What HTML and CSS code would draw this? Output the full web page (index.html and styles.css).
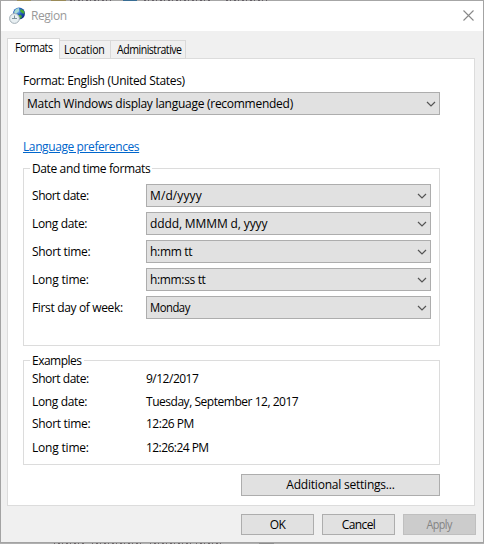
FILE: index.html
```html
<!DOCTYPE html>
<html lang="en">
<head>
<meta charset="utf-8">
<title>Region</title>
<link rel="stylesheet" href="styles.css">
</head>
<body>
<svg class="defs" width="0" height="0" aria-hidden="true"><symbol id="chevron" viewBox="0 0 10 6"><path d="M1 1 L5 5 L9 1" fill="none" stroke="#555" stroke-width="1.2"/></symbol></svg>
<svg class="backdrop" width="484" height="1"><rect width="484" height="1" fill="#a6a6a6"/><path d="M17 .5H31 M51 .5H66" stroke="#9a8b58"/><path d="M70 .5H111 M144 .5H212 M226 .5H267" stroke="#635e65" stroke-dasharray="2 2 1 3"/><path d="M123 .5H137" stroke="#386d94"/></svg>
<div class="window">
  <header class="titlebar">
    <svg class="globe" width="18" height="18" viewBox="0 0 18 18">
      <defs><radialGradient id="sea" cx=".4" cy=".3" r=".75"><stop offset="0" stop-color="#8bc8f0"/><stop offset=".4" stop-color="#2865c0"/><stop offset="1" stop-color="#0b2183"/></radialGradient></defs>
      <circle cx="10" cy="6.5" r="6" fill="url(#sea)"/>
      <path d="M5 5 L7 2 L10 1 L10 4 L8 6 L6 7 Z" fill="#a7d9d3"/>
      <path d="M12 2 L15 4 L15.5 7 L13 6 L11 4 Z M9 8 L12 8 L13 10 L11 12 Z" fill="#46aa36"/>
      <circle cx="5.5" cy="11.5" r="4.9" fill="#e8eff2" stroke="#a2afb7"/>
      <path d="M5.5 8.5 V12 M3 11.5 H8" fill="none" stroke="#7f929c"/>
    </svg>
    <h1 class="title">Region</h1>
    <svg class="close" width="11" height="11" viewBox="0 0 11 11"><path d="M.5 .5 L10.5 10.5 M10.5 .5 L.5 10.5" stroke="#888" stroke-width="1.1"/></svg>
  </header>
  <nav class="tabs">
    <div class="tab active"><span class="t-formats">Formats</span></div>
    <div class="tab location"><span class="t-location">Location</span></div>
    <div class="tab admin"><span class="t-admin">Administrative</span></div>
  </nav>
  <main class="panel">
    <div class="format-label"><span class="t-format">Format: English (United States)</span></div>
    <div class="combo wide"><span class="t-match">Match Windows display language (recommended)</span><svg class="arrow"><use href="#chevron"/></svg></div>
    <a class="link"><span class="t-link">Language preferences</span></a>
    <section class="group formats">
      <h2 class="legend"><span class="t-dtf">Date and time formats</span></h2>
      <div class="row"><span class="name"><span class="t-sd">Short date:</span></span><div class="combo"><span class="t-mdy">M/d/yyyy</span><svg class="arrow"><use href="#chevron"/></svg></div></div>
      <div class="row"><span class="name"><span class="t-ld">Long date:</span></span><div class="combo"><span class="t-dddd">dddd, MMMM d, yyyy</span><svg class="arrow"><use href="#chevron"/></svg></div></div>
      <div class="row"><span class="name"><span class="t-st">Short time:</span></span><div class="combo"><span class="t-hm">h:mm tt</span><svg class="arrow"><use href="#chevron"/></svg></div></div>
      <div class="row"><span class="name"><span class="t-lt">Long time:</span></span><div class="combo"><span class="t-hms">h:mm:ss tt</span><svg class="arrow"><use href="#chevron"/></svg></div></div>
      <div class="row"><span class="name"><span class="t-fd">First day of week:</span></span><div class="combo"><span class="t-mon">Monday</span><svg class="arrow"><use href="#chevron"/></svg></div></div>
    </section>
    <section class="group examples">
      <h2 class="legend"><span class="t-ex">Examples</span></h2>
      <div class="sample"><span class="name"><span class="t-sd">Short date:</span></span><span class="t-v1">9/12/2017</span></div>
      <div class="sample"><span class="name"><span class="t-ld">Long date:</span></span><span class="t-v2">Tuesday, September 12, 2017</span></div>
      <div class="sample short"><span class="name"><span class="t-st">Short time:</span></span><span class="t-v3">12:26 PM</span></div>
      <div class="sample"><span class="name"><span class="t-lt">Long time:</span></span><span class="t-v4">12:26:24 PM</span></div>
    </section>
    <div class="button additional"><span class="t-add">Additional settings...</span></div>
  </main>
  <footer class="actions">
    <div class="button"><span class="t-ok">OK</span></div>
    <div class="button"><span class="t-cancel">Cancel</span></div>
    <div class="button disabled"><span class="t-apply">Apply</span></div>
  </footer>
</div>
<svg class="backdrop" width="484" height="1"><rect width="484" height="1" fill="#b0b0b0"/><path d="M54 .5H86 M92 .5H144 M150 .5H191 M196 .5H221" stroke="#6c6568" stroke-dasharray="1 3 2 2"/><path d="M259 .5H274" stroke="#8f8f8f"/></svg>
</body>
</html>
```
FILE: styles.css
```css
* { box-sizing: border-box; }
body { margin: 0; width: 484px; height: 544px; overflow: hidden; background: #a8a8a8; color: #000; font: 12px/16px "Open Sans", "Noto Sans", sans-serif; }
h1, h2 { margin: 0; font: inherit; }
span { white-space: nowrap; }
.defs, .backdrop { display: block; }
.window { width: 484px; height: 542px; border: 1px solid #a3a3a3; border-top: 0; background: #f0f0f0; }
.titlebar { display: flex; height: 30px; padding: 6px 9px 0 8px; background: #fff; }
.title { margin: 1px 0 0 4px; color: #999; letter-spacing: -.45px; }
.close { margin: 3px 0 0 auto; }
.tabs { display: flex; align-items: flex-end; height: 28px; margin: 0 0 -1px 6px; }
.tab { height: 19px; width: 51px; padding: 1px 0 0 4px; border: 1px solid #d9d9d9; border-left: 0; background: #f0f0f0; }
.tab span { display: inline-block; transform: scaleX(.88); transform-origin: left; }
.tab.admin { width: 75px; padding-left: 6px; }
.tab.active { height: 21px; width: 53px; padding: 1px 0 0 7px; border: 1px solid #d9d9d9; border-bottom: 0; background: #fff; position: relative; }
.panel { width: 468px; height: 448px; margin-left: 6px; padding: 14px 34px 0 15px; border: 1px solid #dcdcdc; background: #fff; }
.format-label { height: 19px; }
.combo { display: flex; align-items: center; justify-content: space-between; width: 285px; height: 23px; padding: 0 3px; border: 1px solid #adadad; background: #e1e1e1; }
.combo.wide { width: 417px; }
.arrow { width: 10px; height: 6px; }
.link { display: block; height: 16px; margin-top: 24px; color: #0066cc; text-decoration: underline; }
.group { width: 417px; border: 1px solid #dcdcdc; padding-left: 8px; }
.formats { height: 178px; margin-top: 13px; }
.legend { width: max-content; height: 16px; margin: -8px 0 0 -2px; padding: 0 2px; background: #fff; }
.row { display: flex; align-items: center; height: 23px; margin-bottom: 5px; }
.legend + .row { margin-top: 7px; }
.name { width: 114px; }
.examples { height: 105px; margin-top: 14px; }
.sample { display: flex; height: 23px; padding-top: 2px; }
.sample.short { padding-top: 1px; }
.button { display: flex; align-items: center; justify-content: center; width: 73px; height: 21px; border: 1px solid #adadad; background: #e1e1e1; }
.button.additional { width: 199px; height: 22px; margin: 9px 0 0 218px; }
.actions { display: flex; gap: 8px; margin: 8px 0 0 240px; }
.button.disabled { color: #838383; border-color: #bfbfbf; background: #ccc; }

/* Per-label tracking */
.t-formats { letter-spacing: -.5px; }
.t-location { letter-spacing: -.2px; }
.t-admin { letter-spacing: -.55px; }
.t-format { letter-spacing: -.31px; }
.t-match { letter-spacing: -.27px; }
.t-link { letter-spacing: -.4px; }
.t-dtf { letter-spacing: -.38px; }
.t-sd { letter-spacing: -.45px; }
.t-ld { letter-spacing: -.35px; }
.t-st { letter-spacing: -.32px; }
.t-lt { letter-spacing: -.2px; }
.t-fd { letter-spacing: -.35px; }
.t-mdy { letter-spacing: .1px; }
.t-dddd { letter-spacing: -.12px; }
.t-hm { letter-spacing: -.3px; }
.t-hms { letter-spacing: -.35px; }
.t-mon { letter-spacing: -.5px; transform: scaleX(.94); transform-origin: left; }
.t-ex { letter-spacing: -.5px; }
.t-v1 { letter-spacing: -.5px; }
.t-v2 { letter-spacing: -.47px; }
.t-v3 { letter-spacing: -.5px; }
.t-v4 { letter-spacing: -.55px; }
.t-add { letter-spacing: -.22px; }
.t-ok { letter-spacing: -.5px; }
.t-cancel { letter-spacing: -.6px; }
.t-apply { letter-spacing: -.6px; transform: scaleX(.9); }
```
